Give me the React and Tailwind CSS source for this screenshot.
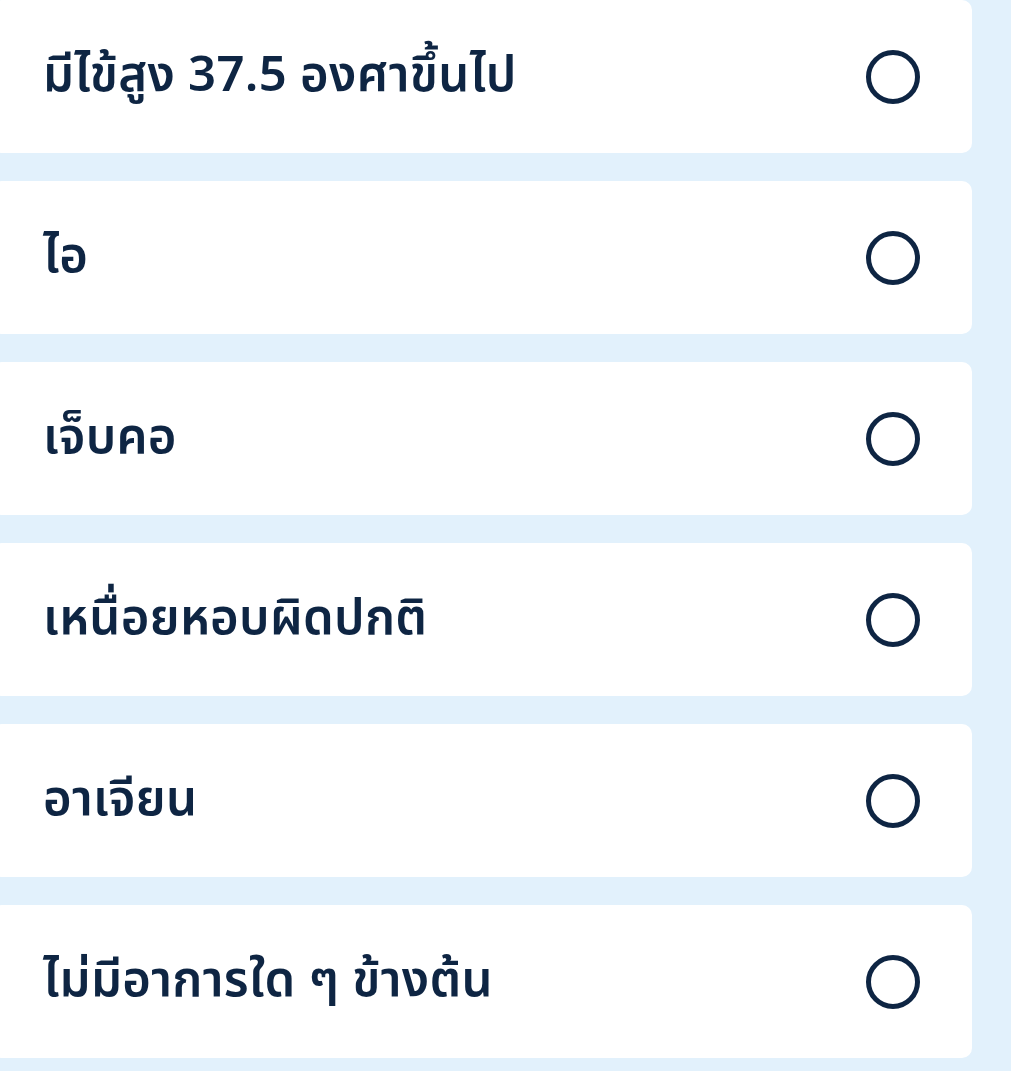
import React, { useState } from 'react';

const symptoms = [
  'มีไข้สูง 37.5 องศาขึ้นไป',
  'ไอ',
  'เจ็บคอ',
  'เหนื่อยหอบผิดปกติ',
  'อาเจียน',
  'ไม่มีอาการใด ๆ ข้างต้น',
];

export default function App() {
  const [picked, setPicked] = useState(null);

  return (
    <div className="min-h-screen w-full bg-[#e2f1fc] overflow-hidden" style={{ fontFamily: '"Noto Sans Thai", "Noto Sans", sans-serif' }}>
      <div className="w-[980px] -ml-[8px] flex flex-col gap-[28px]">
        {symptoms.map((s, idx) => (
          <button
            key={s}
            onClick={() => setPicked(idx)}
            className="h-[153px] w-full bg-white rounded-[10px] flex items-center justify-between pl-[51px] pr-[52px] text-left"
          >
            <span className="text-[49px] font-semibold tracking-[0.3px] text-[#0e2543] leading-none">{s}</span>
            <span className="w-[54px] h-[54px] rounded-full border-[5px] border-[#0e2543] flex items-center justify-center">
              {picked === idx ? <span className="w-[28px] h-[28px] rounded-full bg-[#0e2543]" /> : null}
            </span>
          </button>
        ))}
      </div>
    </div>
  );
}
